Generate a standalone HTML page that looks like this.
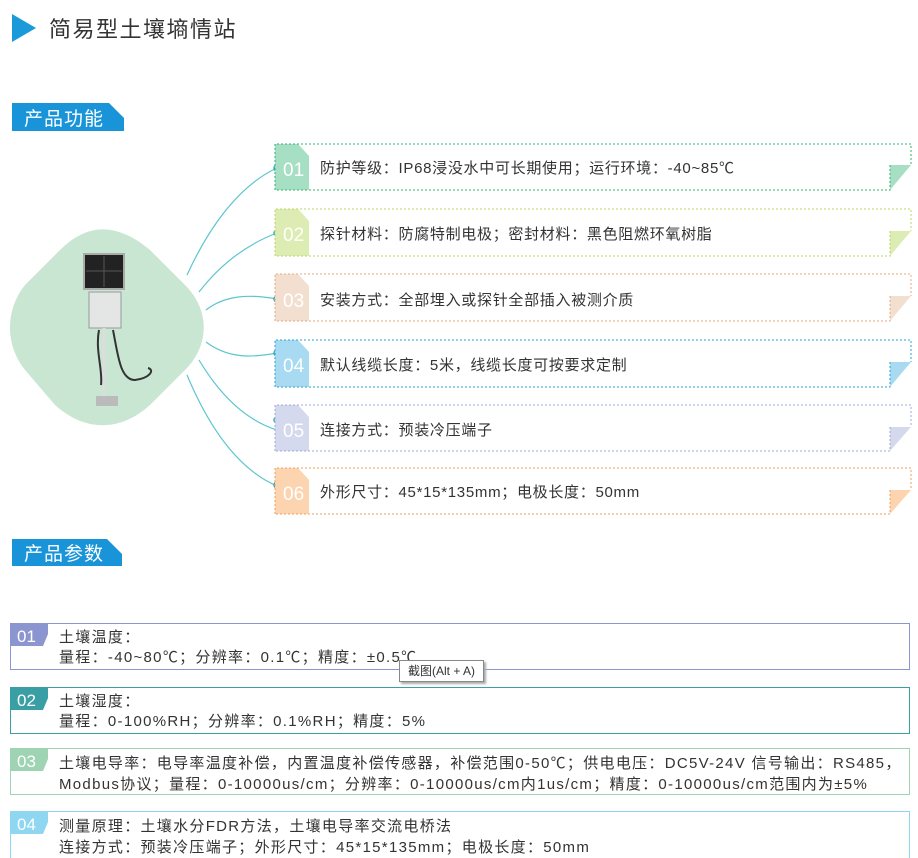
<!DOCTYPE html>
<html><head><meta charset="utf-8"><style>
body{margin:0;width:918px;height:858px;background:#fff;overflow:hidden;position:relative;font-family:"Liberation Sans","Noto Sans CJK SC",sans-serif;}
.a{position:absolute}
.t{font-size:15px;color:#333;white-space:nowrap;letter-spacing:0.7px}
.p{font-size:15px;color:#333;white-space:nowrap;letter-spacing:1.3px}
</style></head><body>
<svg class="a" style="left:0;top:0" width="918" height="858">
<polygon points="12,14 36,28 12,42" fill="#1a9ad8"/>
<text x="49" y="37" font-size="22" letter-spacing="1.5" fill="#333" font-family="Liberation Sans,Noto Sans CJK SC,sans-serif">简易型土壤墒情站</text>
<polygon points="12,103 109,103 124,118 124,131 12,131" fill="#1a94d8"/>
<text x="24" y="125" font-size="19" letter-spacing="1" fill="#fff" font-family="Noto Sans CJK SC,sans-serif">产品功能</text>
<polygon points="12,539 107,539 122,554 122,566 12,566" fill="#1a94d8"/>
<text x="24" y="560" font-size="19" letter-spacing="1" fill="#fff" font-family="Noto Sans CJK SC,sans-serif">产品参数</text>
<path d="M60,250 C90,220 120,225 150,250 L185,285 C210,310 210,345 185,370 L150,405 C120,432 85,432 55,405 L25,370 C5,345 5,310 25,285 Z" fill="#c9e6d3"/>
<rect x="84" y="254" width="40" height="35" fill="#222" stroke="#aaa" stroke-width="2"/>
<line x1="104" y1="256" x2="104" y2="287" stroke="#555"/><line x1="86" y1="271" x2="122" y2="271" stroke="#555"/>
<rect x="89" y="292" width="32" height="36" fill="#e4e6e6" stroke="#999"/>
<line x1="104" y1="328" x2="104" y2="398" stroke="#ddd" stroke-width="3"/>
<path d="M99,330 C95,350 103,370 101,385 M113,330 C118,355 120,380 135,380 C150,378 155,370 148,368" stroke="#333" stroke-width="2" fill="none"/>
<rect x="96" y="396" width="22" height="10" fill="#bbb"/>
<g stroke="#5cc6cf" stroke-width="1.2" fill="none">
<path d="M187,275 C210,225 240,185 277,168"/>
<path d="M199,292 C220,265 245,245 277,233"/>
<path d="M206,310 C225,295 250,294 277,299"/>
<path d="M206,342 C230,360 255,357 277,353"/>
<path d="M199,360 C220,395 245,420 277,430"/>
<path d="M187,375 C210,430 240,470 277,486"/>
</g>
<g fill="#fff" stroke="#3aa7b5" stroke-width="1.5">
<circle cx="277" cy="168" r="3"/><circle cx="277" cy="233" r="3"/><circle cx="277" cy="299" r="3"/><circle cx="277" cy="353" r="3"/><circle cx="277" cy="420" r="3"/><circle cx="277" cy="485" r="3"/>
</g>
<g font-family="Liberation Sans,sans-serif" font-size="19" fill="#fff">
<polygon points="275,144 298,144 309,156 309,190 275,190" fill="#a6dfc4"/>
<polygon points="890,165 911,165 890,190" fill="#a6dfc4"/>
<path d="M275,190 V144 H911 V165 M890,165 V190 H275" fill="none" stroke="#2fb36b" stroke-dasharray="2,2"/>
<text x="283" y="176">01</text>
<polygon points="275,209 298,209 309,221 309,256 275,256" fill="#ddecb2"/>
<polygon points="890,231 911,231 890,256" fill="#ddecb2"/>
<path d="M275,256 V209 H911 V231 M890,231 V256 H275" fill="none" stroke="#b8d860" stroke-dasharray="2,2"/>
<text x="283" y="241">02</text>
<polygon points="275,274 298,274 309,286 309,321 275,321" fill="#f3dfd0"/>
<polygon points="890,296 911,296 890,321" fill="#f3dfd0"/>
<path d="M275,321 V274 H911 V296 M890,296 V321 H275" fill="none" stroke="#eaa880" stroke-dasharray="2,2"/>
<text x="283" y="307">03</text>
<polygon points="275,340 298,340 309,352 309,387 275,387" fill="#a8dbf2"/>
<polygon points="890,362 911,362 890,387" fill="#a8dbf2"/>
<path d="M275,387 V340 H911 V362 M890,362 V387 H275" fill="none" stroke="#2aa0da" stroke-dasharray="2,2"/>
<text x="283" y="372">04</text>
<polygon points="275,405 298,405 309,417 309,451 275,451" fill="#d4d9ee"/>
<polygon points="890,427 911,427 890,451" fill="#d4d9ee"/>
<path d="M275,451 V405 H911 V427 M890,427 V451 H275" fill="none" stroke="#9ea8d8" stroke-dasharray="2,2"/>
<text x="283" y="437">05</text>
<polygon points="275,468 298,468 309,480 309,514 275,514" fill="#fcd4b0"/>
<polygon points="890,490 911,490 890,514" fill="#fcd4b0"/>
<path d="M275,514 V468 H911 V490 M890,490 V514 H275" fill="none" stroke="#f0a060" stroke-dasharray="2,2"/>
<text x="283" y="500">06</text>
</g>
<g font-family="Liberation Sans,sans-serif" font-size="17" fill="#fff">
<rect x="10.5" y="623.5" width="899" height="46" fill="none" stroke="#8b95cf"/>
<polygon points="10,623 48,623 48,634 43,646 10,646" fill="#8b95cf"/><text x="17" y="642">01</text>
<rect x="10.5" y="687.5" width="899" height="46" fill="none" stroke="#3a9ea5"/>
<polygon points="10,687 48,687 48,698 43,710 10,710" fill="#3a9ea5"/><text x="17" y="706">02</text>
<rect x="10.5" y="748.5" width="899" height="46" fill="none" stroke="#9ed4b3"/>
<polygon points="10,748 48,748 48,759 43,771 10,771" fill="#9ed4b3"/><text x="17" y="767">03</text>
<rect x="10.5" y="811.5" width="899" height="50" fill="none" stroke="#8fd6f0"/>
<polygon points="10,811 48,811 48,822 43,834 10,834" fill="#8fd6f0"/><text x="17" y="830">04</text>
</g>
</svg>
<div class="a t" style="left:320px;top:157px">防护等级：IP68浸没水中可长期使用；运行环境：-40~85℃</div>
<div class="a t" style="left:320px;top:223px">探针材料：防腐特制电极；密封材料：黑色阻燃环氧树脂</div>
<div class="a t" style="left:320px;top:289px">安装方式：全部埋入或探针全部插入被测介质</div>
<div class="a t" style="left:320px;top:354px">默认线缆长度：5米，线缆长度可按要求定制</div>
<div class="a t" style="left:320px;top:419px">连接方式：预装冷压端子</div>
<div class="a t" style="left:320px;top:481px">外形尺寸：45*15*135mm；电极长度：50mm</div>
<div class="a p" style="left:59px;top:628px;line-height:20px">土壤温度：<br>量程：-40~80℃；分辨率：0.1℃；精度：±0.5℃</div>
<div class="a p" style="left:59px;top:692px;line-height:20px">土壤湿度：<br>量程：0-100%RH；分辨率：0.1%RH；精度：5%</div>
<div class="a p" style="left:59px;top:753px;line-height:21px">土壤电导率：电导率温度补偿，内置温度补偿传感器，补偿范围0-50℃；供电电压：DC5V-24V 信号输出：RS485，<br>Modbus协议；量程：0-10000us/cm；分辨率：0-10000us/cm内1us/cm；精度：0-10000us/cm范围内为±5%</div>
<div class="a p" style="left:59px;top:816px;line-height:21px">测量原理：土壤水分FDR方法，土壤电导率交流电桥法<br>连接方式：预装冷压端子；外形尺寸：45*15*135mm；电极长度：50mm</div>
<div class="a" style="left:399px;top:660px;width:83px;height:20px;border:1px solid #888;background:#fff;box-shadow:2px 2px 2px #aaa;font-size:12px;color:#333;line-height:20px;text-align:center">截图(Alt + A)</div>
</body></html>
